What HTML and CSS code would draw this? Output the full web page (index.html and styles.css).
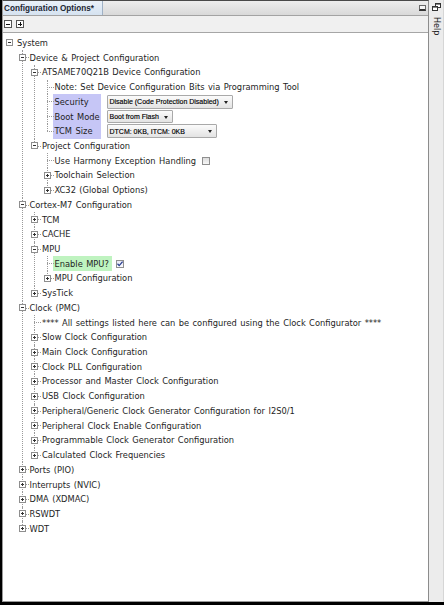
FILE: index.html
```html
<!DOCTYPE html>
<html>
<head>
<meta charset="utf-8">
<link rel="stylesheet" href="styles.css">
</head>
<body>
<div class="frame">
  <div class="panel">
    <div class="tabbar">
      <div class="tab">Configuration Options*</div>
      <span class="min-icon"></span>
    </div>
    <div class="toolbar">
      <span class="tbtn"><i class="bar"></i></span>
      <span class="tbtn"><i class="bar"></i><i class="vbar"></i></span>
    </div>
    <div class="tree-area">
      <ul class="tree">
        <li>
          <div class="row"><span class="h"><i class="box"></i></span><span class="lbl">System</span></div>
          <ul>
            <li>
              <div class="row"><span class="h"><i class="box"></i></span><span class="lbl">Device &amp; Project Configuration</span></div>
              <ul>
                <li>
                  <div class="row"><span class="h"><i class="box"></i></span><span class="lbl">ATSAME70Q21B Device Configuration</span></div>
                  <ul>
                    <li><div class="row"><span class="h"></span><span class="lbl">Note: Set Device Configuration Bits via Programming Tool</span></div></li>
                    <li><div class="row"><span class="h"></span><span class="lbl hl-blue">Security</span><span class="combo w-sec">Disable (Code Protection Disabled)<i class="arr"></i></span></div></li>
                    <li><div class="row"><span class="h"></span><span class="lbl hl-blue">Boot Mode</span><span class="combo w-boot">Boot from Flash<i class="arr"></i></span></div></li>
                    <li><div class="row"><span class="h"></span><span class="lbl hl-blue">TCM Size</span><span class="combo w-tcm">DTCM: 0KB, ITCM: 0KB<i class="arr"></i></span></div></li>
                  </ul>
                </li>
                <li>
                  <div class="row"><span class="h"><i class="box"></i></span><span class="lbl">Project Configuration</span></div>
                  <ul>
                    <li><div class="row"><span class="h"></span><span class="lbl">Use Harmony Exception Handling</span><span class="chk chk-harmony"></span></div></li>
                    <li><div class="row"><span class="h"><i class="box plus"></i></span><span class="lbl">Toolchain Selection</span></div></li>
                    <li><div class="row"><span class="h"><i class="box plus"></i></span><span class="lbl">XC32 (Global Options)</span></div></li>
                  </ul>
                </li>
              </ul>
            </li>
            <li>
              <div class="row"><span class="h"><i class="box"></i></span><span class="lbl">Cortex-M7 Configuration</span></div>
              <ul>
                <li><div class="row"><span class="h"><i class="box plus"></i></span><span class="lbl">TCM</span></div></li>
                <li><div class="row"><span class="h"><i class="box plus"></i></span><span class="lbl">CACHE</span></div></li>
                <li>
                  <div class="row"><span class="h"><i class="box"></i></span><span class="lbl">MPU</span></div>
                  <ul>
                    <li><div class="row"><span class="h"></span><span class="lbl hl-green">Enable MPU?</span><span class="chk checked"><svg width="8" height="8" viewBox="0 0 8 8"><path d="M1.5 3.8 L3.2 5.6 L6.6 1.6" fill="none" stroke="#2a3f8f" stroke-width="1.3"/></svg></span></div></li>
                    <li><div class="row"><span class="h"><i class="box plus"></i></span><span class="lbl">MPU Configuration</span></div></li>
                  </ul>
                </li>
                <li><div class="row"><span class="h"><i class="box plus"></i></span><span class="lbl">SysTick</span></div></li>
              </ul>
            </li>
            <li>
              <div class="row"><span class="h"><i class="box"></i></span><span class="lbl">Clock (PMC)</span></div>
              <ul>
                <li><div class="row"><span class="h"></span><span class="lbl">**** All settings listed here can be configured using the Clock Configurator ****</span></div></li>
                <li><div class="row"><span class="h"><i class="box plus"></i></span><span class="lbl">Slow Clock Configuration</span></div></li>
                <li><div class="row"><span class="h"><i class="box plus"></i></span><span class="lbl">Main Clock Configuration</span></div></li>
                <li><div class="row"><span class="h"><i class="box plus"></i></span><span class="lbl">Clock PLL Configuration</span></div></li>
                <li><div class="row"><span class="h"><i class="box plus"></i></span><span class="lbl">Processor and Master Clock Configuration</span></div></li>
                <li><div class="row"><span class="h"><i class="box plus"></i></span><span class="lbl">USB Clock Configuration</span></div></li>
                <li><div class="row"><span class="h"><i class="box plus"></i></span><span class="lbl">Peripheral/Generic Clock Generator Configuration for I2S0/1</span></div></li>
                <li><div class="row"><span class="h"><i class="box plus"></i></span><span class="lbl">Peripheral Clock Enable Configuration</span></div></li>
                <li><div class="row"><span class="h"><i class="box plus"></i></span><span class="lbl">Programmable Clock Generator Configuration</span></div></li>
                <li><div class="row"><span class="h"><i class="box plus"></i></span><span class="lbl">Calculated Clock Frequencies</span></div></li>
              </ul>
            </li>
            <li><div class="row"><span class="h"><i class="box plus"></i></span><span class="lbl">Ports (PIO)</span></div></li>
            <li><div class="row"><span class="h"><i class="box plus"></i></span><span class="lbl">Interrupts (NVIC)</span></div></li>
            <li><div class="row"><span class="h"><i class="box plus"></i></span><span class="lbl">DMA (XDMAC)</span></div></li>
            <li><div class="row"><span class="h"><i class="box plus"></i></span><span class="lbl">RSWDT</span></div></li>
            <li><div class="row"><span class="h"><i class="box plus"></i></span><span class="lbl">WDT</span></div></li>
          </ul>
        </li>
      </ul>
    </div>
  </div>
  <div class="sidebar">
    <svg class="restore" width="9" height="8" viewBox="0 0 9 8">
      <rect x="3.5" y="0.5" width="5" height="4" fill="#fff" stroke="#333"/>
      <rect x="3" y="0" width="6" height="1.6" fill="#333"/>
      <rect x="0.5" y="3.5" width="5" height="4" fill="#fff" stroke="#333"/>
      <rect x="0" y="3" width="6" height="1.6" fill="#333"/>
    </svg>
    <span class="help">Help</span>
  </div>
</div>
</body>
</html>
```
FILE: styles.css
```css
html, body {
  margin: 0;
  padding: 0;
  background: #000;
}
body {
  font-family: "DejaVu Sans", sans-serif;
  font-size: 8.3px;
  color: #1e1e1e;
}
.frame {
  width: 444px;
  height: 605px;
  box-sizing: border-box;
  border-left: 2px solid #000;
  border-bottom: 3px solid #000;
  display: flex;
  background: #ececec;
}
.panel {
  width: 427px;
  flex: none;
  box-sizing: border-box;
  border-top: 1px solid #4a4a4a;
  border-left: 1px solid #9a9a9a;
  border-right: 1px solid #8c8c8c;
  border-bottom: 1px solid #9a9a9a;
  display: flex;
  flex-direction: column;
  background: #fff;
}
.tabbar {
  height: 14px;
  flex: none;
  border-bottom: 1px solid #a3a3a3;
  background: linear-gradient(#eeeeee, #d9d9d9);
  display: flex;
  align-items: stretch;
}
.tab {
  width: 98px;
  border-right: 1px solid #9fb1c5;
  background: linear-gradient(#eaf1f9, #d5e2f0);
  font-family: "Liberation Sans", sans-serif;
  font-weight: bold;
  font-size: 8.2px;
  color: #1c2633;
  padding-left: 1px;
  display: flex;
  align-items: center;
}
.min-icon {
  margin-left: auto;
  margin-right: 2px;
  align-self: center;
  width: 7px;
  height: 6px;
  box-sizing: border-box;
  border: 1px solid #6a6a6a;
  border-bottom: 2px solid #333;
  background: #f6f6f6;
}
.toolbar {
  height: 16px;
  flex: none;
  background: #f0f0f0;
  border-bottom: 1px solid #a6a6a6;
  display: flex;
  align-items: center;
  gap: 4px;
  padding-left: 1px;
}
.tbtn {
  position: relative;
  width: 8px;
  height: 8px;
  box-sizing: border-box;
  border: 1px solid #555;
  background: #fff;
}
.tbtn .bar {
  position: absolute;
  left: 1px;
  top: 2.5px;
  width: 4px;
  height: 1px;
  background: #111;
}
.tbtn .vbar {
  position: absolute;
  left: 2.5px;
  top: 1px;
  width: 1px;
  height: 4px;
  background: #111;
}
.tree-area {
  flex: 1;
  padding: 2.6px 0 0 1px;
  overflow: hidden;
  word-spacing: 0.8px;
}
.tree, .tree ul {
  list-style: none;
  margin: 0;
  padding: 0;
}
.tree ul {
  padding-left: 12.5px;
}
.tree li {
  position: relative;
}
.tree ul > li::before {
  content: "";
  position: absolute;
  left: 5px;
  top: 0;
  bottom: 0;
  border-left: 1px dotted #9a9a9a;
}
.tree ul > li:last-child::before {
  bottom: auto;
  height: 7.4px;
}
.row {
  position: relative;
  height: 14.73px;
  display: flex;
  align-items: center;
  white-space: nowrap;
}
.tree ul > li > .row::before {
  content: "";
  position: absolute;
  left: 5px;
  width: 7px;
  top: 7px;
  border-top: 1px dotted #9a9a9a;
}
.h {
  position: relative;
  width: 13px;
  height: 100%;
  flex: none;
}
.box {
  position: absolute;
  left: 2px;
  top: 50%;
  margin-top: -3.5px;
  width: 7px;
  height: 7px;
  box-sizing: border-box;
  border: 1px solid #8e8e8e;
  background: #fff;
  z-index: 1;
}
.box::before {
  content: "";
  position: absolute;
  left: 1px;
  top: 2px;
  width: 3px;
  height: 1px;
  background: #333;
}
.box.plus::after {
  content: "";
  position: absolute;
  left: 2px;
  top: 1px;
  width: 1px;
  height: 3px;
  background: #333;
}
.lbl {
  margin-left: -1.5px;
  padding-left: 1.5px;
  height: 100%;
  display: flex;
  align-items: center;
  box-sizing: border-box;
}
.hl-blue {
  background: #c6c6f6;
  width: 48px;
}
.hl-green {
  background: #bff3c0;
  width: 59px;
}
.combo {
  position: relative;
  margin-left: 6px;
  height: 13.6px;
  box-sizing: border-box;
  border: 1px solid #a9a9a9;
  border-radius: 1px;
  background: linear-gradient(#fbfbfb, #e3e3e3);
  font-family: "Liberation Sans", sans-serif;
  font-size: 7px;
  word-spacing: 0;
  color: #000;
  -webkit-text-stroke: 0.15px #000;
  padding-left: 1.5px;
  display: flex;
  align-items: center;
}
.w-sec { width: 126px; }
.w-boot { width: 66px; }
.w-tcm { width: 110px; }
.arr {
  position: absolute;
  right: 4px;
  top: 50%;
  margin-top: -1px;
  width: 0;
  height: 0;
  border-left: 2.5px solid transparent;
  border-right: 2.5px solid transparent;
  border-top: 3px solid #222;
}
.chk {
  width: 8px;
  height: 8px;
  box-sizing: border-box;
  border: 1px solid #8f8f8f;
  background: linear-gradient(#dcdcdc, #f7f7f7);
  margin-left: 4px;
  position: relative;
  display: flex;
}
.chk svg {
  position: absolute;
  left: -1px;
  top: -1px;
}
.chk-harmony {
  margin-left: 6px;
}
.chk.checked {
  background: linear-gradient(#e6e6f4, #fbfbff);
}
.sidebar {
  flex: 1;
  display: flex;
  flex-direction: column;
  align-items: center;
  padding-top: 3px;
  gap: 6px;
  border-right: 1px solid #d6d6d6;
}
.restore {
  display: block;
}
.help {
  writing-mode: vertical-rl;
  font-family: "DejaVu Sans", sans-serif;
  font-size: 8px;
  color: #222;
}
```
